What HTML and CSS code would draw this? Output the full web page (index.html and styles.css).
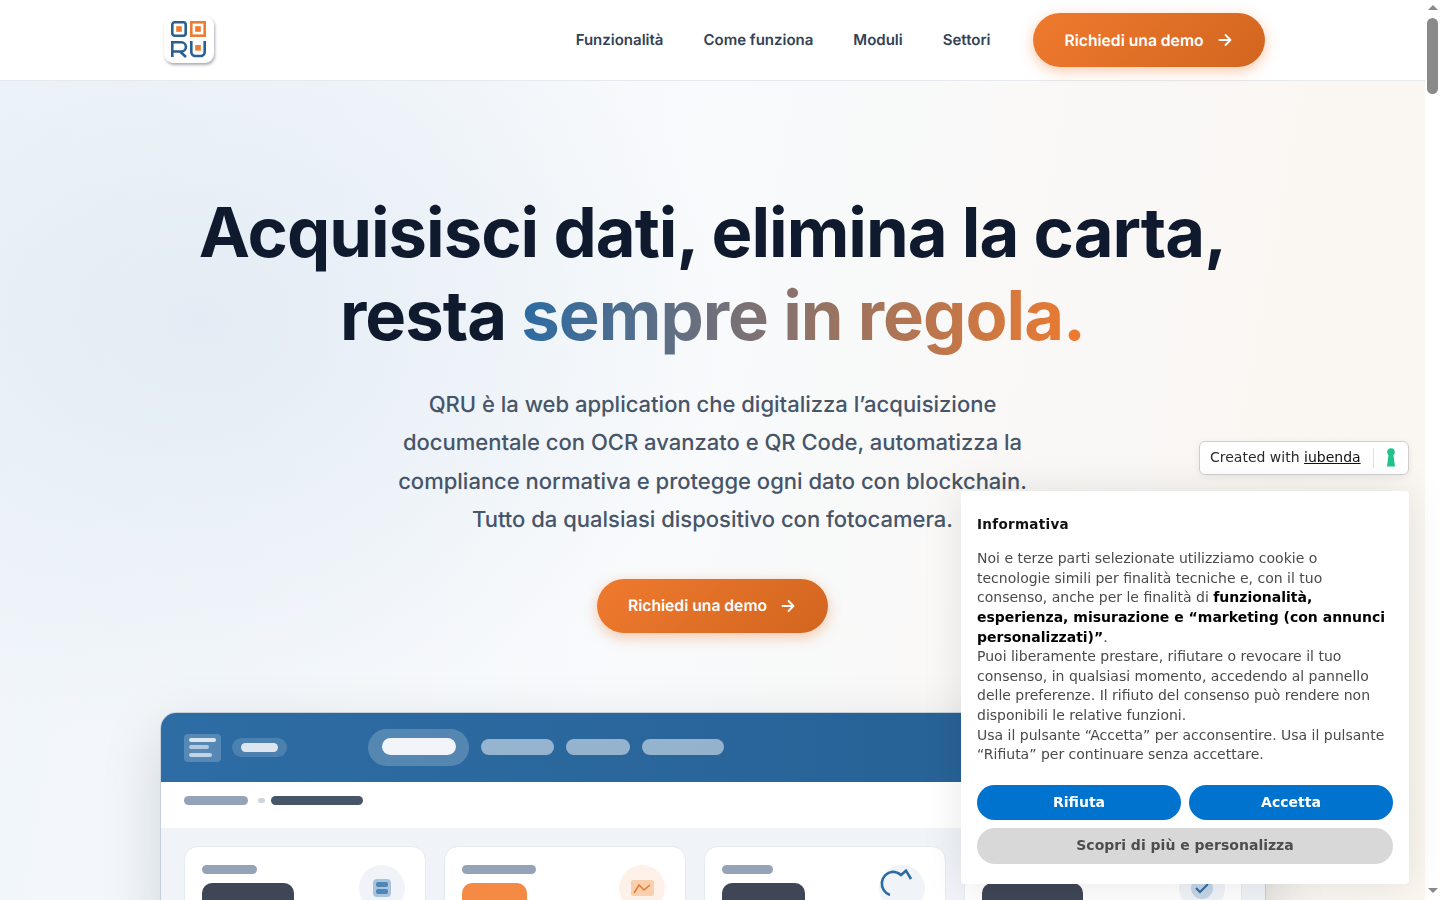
FILE: index.html
```html
<!DOCTYPE html>
<html lang="it">
<head>
    <meta charset="utf-8">
    <title>QRU</title>
    <link rel="stylesheet" href="styles.css">
</head>
<body>
<div class="page">
    <header class="topbar">
        <div class="topbar_inner">
            <a class="logo" href="#">
                <svg width="36" height="37" viewBox="0 0 36 37">
                    <rect x="1.3" y="1.3" width="13.4" height="13.4" rx="2.5" fill="none" stroke="#2a5f91" stroke-width="2.6"/>
                    <rect x="5.2" y="5.2" width="5.6" height="5.6" fill="#ed7b30"/>
                    <rect x="20.3" y="1.3" width="13.4" height="13.4" fill="none" stroke="#ed7b30" stroke-width="2.6"/>
                    <rect x="24.2" y="5.2" width="5.6" height="5.6" fill="#ed7b30"/>
                    <path d="M1.3 36V21.3h9a4.5 4.5 0 0 1 0 9.2H1.3M9 30.5l6 5.5" fill="none" stroke="#2a5f91" stroke-width="2.6"/>
                    <path d="M20.3 20v11a4 4 0 0 0 4 4h5.4a4 4 0 0 0 4-4V20" fill="none" stroke="#2a5f91" stroke-width="2.6"/>
                    <rect x="24.2" y="24" width="5.6" height="5.6" fill="#ed7b30"/>
                </svg>
            </a>
            <nav class="menu">
                <a href="#">Funzionalità</a>
                <a href="#">Come funziona</a>
                <a href="#">Moduli</a>
                <a href="#">Settori</a>
            </nav>
            <a class="cta" href="#">Richiedi una demo
                <svg width="16" height="16" viewBox="0 0 16 16"><path d="M2.5 8h11M8.5 3l5 5-5 5" fill="none" stroke="#fff" stroke-width="1.8" stroke-linecap="round" stroke-linejoin="round"/></svg>
            </a>
        </div>
    </header>

    <main class="hero">
        <h1>Acquisisci dati, elimina la carta,<br>resta <span class="grad">sempre in regola.</span></h1>
        <p class="lead">QRU è la web application che digitalizza l’acquisizione<br>documentale con OCR avanzato e QR Code, automatizza la<br>compliance normativa e protegge ogni dato con blockchain.<br>Tutto da qualsiasi dispositivo con fotocamera.</p>
        <a class="cta cta_hero" href="#">Richiedi una demo
            <svg width="16" height="16" viewBox="0 0 16 16"><path d="M2.5 8h11M8.5 3l5 5-5 5" fill="none" stroke="#fff" stroke-width="1.8" stroke-linecap="round" stroke-linejoin="round"/></svg>
        </a>

        <section class="mock">
            <div class="mock_head">
                <div class="mock_brand">
                    <span class="brand_icon"><i></i><i></i><i></i></span>
                    <span class="brand_pill"><i></i></span>
                </div>
                <div class="mock_tabs">
                    <span class="tab_active"><i></i></span>
                    <span class="tab t1"></span>
                    <span class="tab t2"></span>
                    <span class="tab t3"></span>
                </div>
            </div>
            <div class="mock_crumbs">
                <span class="crumb c1"></span>
                <span class="crumb c2"></span>
                <span class="crumb c3"></span>
            </div>
            <div class="mock_body">
                <div class="stat">
                    <div><span class="stat_label w55"></span><span class="stat_value w92"></span></div>
                    <span class="stat_icon blue">
                        <span class="db"><i></i><i></i></span>
                    </span>
                </div>
                <div class="stat">
                    <div><span class="stat_label w74"></span><span class="stat_value w65 orange"></span></div>
                    <span class="stat_icon peach">
                        <svg width="23" height="16" viewBox="0 0 23 16"><rect width="23" height="16" rx="2" fill="#f9cfae"/><path d="M3 13l5-8 5 5 6-5" fill="none" stroke="#e67a33" stroke-width="1.5"/></svg>
                    </span>
                </div>
                <div class="stat">
                    <div><span class="stat_label w51"></span><span class="stat_value w83"></span></div>
                    <span class="stat_icon blue">
                        <svg class="gauge" width="46" height="46" viewBox="0 0 46 46"><path d="M11 30A12 12 0 0 1 13.5 6.7Q18.5 6.8 22 10L27 5.7L32 14" fill="none" stroke="#2c6ba3" stroke-width="2.6"/></svg>
                    </span>
                </div>
                <div class="stat stat_wide">
                    <div><span class="stat_label w51"></span><span class="stat_value w101"></span></div>
                    <span class="stat_icon blue">
                        <span class="check"><svg width="16" height="12" viewBox="0 0 16 12"><path d="M2 6l4 4 8-8" fill="none" stroke="#2c6ba3" stroke-width="2"/></svg></span>
                    </span>
                </div>
            </div>
        </section>
    </main>
</div>

<aside class="scrollbar">
    <span class="arrow up"></span>
    <span class="thumb"></span>
    <span class="arrow down"></span>
</aside>

<div class="iub_badge">
    <span class="iub_text">Created with <u>iubenda</u></span>
    <span class="iub_sep"></span>
    <svg class="iub_key" width="10" height="19" viewBox="0 0 10 19"><circle cx="5" cy="4" r="3.8" fill="#1fc48d"/><path d="M2.8 5h4.400L9 18.5H1z" fill="#1fc48d"/></svg>
</div>

<div class="cookie">
    <p class="cookie_title">Informativa</p>
    <p class="cookie_text">Noi e terze parti selezionate utilizziamo cookie o tecnologie simili per finalità tecniche e, con il tuo consenso, anche per le finalità di <b>funzionalità, esperienza, misurazione e “marketing (con annunci personalizzati)”</b>.<br>Puoi liberamente prestare, rifiutare o revocare il tuo consenso, in qualsiasi momento, accedendo al pannello delle preferenze. Il rifiuto del consenso può rendere non disponibili le relative funzioni.<br>Usa il pulsante “Accetta” per acconsentire. Usa il pulsante “Rifiuta” per continuare senza accettare.</p>
    <div class="cookie_btns">
        <button class="btn_blue">Rifiuta</button>
        <button class="btn_blue">Accetta</button>
        <button class="btn_grey">Scopri di più e personalizza</button>
    </div>
</div>
</body>
</html>
```

FILE: styles.css
```css
* {
    box-sizing: border-box;
}
html, body {
    height: 100%;
}
body {
    margin: 0;
    display: flex;
    height: 900px;
    overflow: hidden;
    background-color: #fff;
    font-family: Inter, "Liberation Sans", sans-serif;
}
a {
    text-decoration: none;
    color: inherit;
}

.page {
    width: 1425px;
    flex: none;
    height: 900px;
    overflow: hidden;
}

/* barre du haut */
.topbar {
    height: 81px;
    background-color: #fff;
    border-bottom: 1px solid #e6e9ed;
}
.topbar_inner {
    width: 1200px;
    height: 80px;
    margin: 0 auto;
    padding: 0 48px;
    display: flex;
    align-items: center;
}
.logo {
    width: 50px;
    height: 47px;
    margin: 0 0 1px 3px;
    display: flex;
    align-items: center;
    justify-content: center;
    background-color: #fff;
    border-radius: 9px;
    box-shadow: 1px 2px 3px rgba(15, 23, 42, .35);
}
.menu {
    margin-left: auto;
    margin-right: 42px;
    padding-bottom: 2px;
    display: flex;
    gap: 40px;
    font-size: 15px;
    font-weight: 600;
    color: #334155;
    text-rendering: geometricPrecision;
}
.cta {
    display: flex;
    align-items: center;
    justify-content: center;
    gap: 13px;
    width: 232px;
    height: 54px;
    border-radius: 27px;
    background: linear-gradient(135deg, #ef7a2e, #d2651f);
    box-shadow: 0 4px 14px rgba(237, 123, 48, .4);
    color: #fff;
    font-size: 15.68px;
    font-weight: 600;
    text-rendering: geometricPrecision;
}
.cta_hero {
    width: 231px;
    margin: 0 auto;
    padding: 0 1px 1px 0;
}

/* hero */
.hero {
    height: 819px;
    padding-top: 110px;
    text-align: center;
    background:
        radial-gradient(520px 420px at 200px 240px, rgba(222, 232, 242, .75), rgba(222, 232, 242, 0)),
        linear-gradient(100deg, #f0f5fa 0%, #f8fafc 45%, #fbf6f0 100%);
}
h1 {
    margin: 0;
    font-size: 68.7px;
    line-height: 83px;
    font-weight: 700;
    letter-spacing: -1px;
    color: #0f1a2e;
}
.grad {
    background: linear-gradient(90deg, #2c6ba3, #ef7a2e);
    -webkit-background-clip: text;
    background-clip: text;
    color: transparent;
}
.lead {
    height: 154px;
    margin: 29px 0 39px;
    font-size: 22px;
    font-weight: 500;
    line-height: 38.4px;
    color: #475569;
    text-rendering: geometricPrecision;
}

/* faux tableau de bord */
.mock {
    width: 1106px;
    height: 300px;
    margin: 79px 0 0 160px;
    border: 1px solid #c5cfdb;
    border-radius: 16px 16px 0 0;
    overflow: hidden;
    background-color: #fff;
    box-shadow: 0 20px 60px rgba(15, 23, 42, .15);
    text-align: left;
}
.mock_head {
    height: 69px;
    padding-left: 23px;
    display: flex;
    align-items: center;
    background: linear-gradient(90deg, #2d6ca4, #265f92);
}
.mock_brand {
    width: 184px;
    display: flex;
    align-items: center;
    gap: 11px;
}
.brand_icon {
    width: 37px;
    height: 28px;
    padding: 4px 5px 5px;
    display: flex;
    flex-direction: column;
    justify-content: space-between;
    border-radius: 4px;
    background-color: rgba(255, 255, 255, .2);
}
.brand_icon i {
    height: 4px;
    border-radius: 2px;
    background-color: #dde6ef;
}
.brand_icon i:nth-child(2) {
    width: 20px;
    opacity: .7;
}
.brand_icon i:nth-child(3) {
    width: 23px;
    opacity: .8;
}
.brand_pill {
    width: 55px;
    height: 19px;
    padding: 5px 9px;
    border-radius: 10px;
    background-color: rgba(255, 255, 255, .15);
}
.brand_pill i {
    display: block;
    height: 9px;
    border-radius: 5px;
    background-color: #dde6ef;
}
.mock_tabs {
    display: flex;
    align-items: center;
    gap: 12px;
}
.tab_active {
    width: 101px;
    height: 37px;
    padding: 9px 13px 9px 14px;
    border-radius: 19px;
    background-color: rgba(255, 255, 255, .2);
}
.tab_active i {
    display: block;
    height: 17px;
    border-radius: 9px;
    background-color: #f1f5f9;
}
.tab {
    height: 16px;
    margin-bottom: 2px;
    border-radius: 8px;
    background-color: rgba(255, 255, 255, .5);
}
.t1 { width: 73px; }
.t2 { width: 64px; }
.t3 { width: 82px; }

.mock_crumbs {
    height: 46px;
    padding: 14px 0 0 23px;
    display: flex;
    align-items: flex-start;
    background-color: #fff;
}
.crumb {
    height: 9px;
    border-radius: 5px;
}
.c1 { width: 64px; background-color: #94a3b8; }
.c2 { width: 7px; height: 5px; margin: 2px 6px 0 10px; background-color: #cbd5e1; }
.c3 { width: 92px; background-color: #475569; }

.mock_body {
    height: 190px;
    padding: 18px 23px;
    display: flex;
    gap: 18px;
    background-color: #f0f4f8;
}
.stat {
    width: 242px;
    height: 120px;
    flex: none;
    padding: 18px 20px 0 17px;
    display: flex;
    justify-content: space-between;
    background-color: #fff;
    border: 1px solid #e6ebf1;
    border-radius: 14px;
}
.stat_wide {
    width: 278px;
    padding-right: 16px;
}
.stat_label, .stat_value {
    display: block;
    border-radius: 5px;
}
.stat_label {
    height: 9px;
    background-color: #94a3b8;
}
.stat_value {
    height: 30px;
    margin-top: 9px;
    border-radius: 10px;
    background-color: #3f4656;
}
.orange { background-color: #f58a45; }
.w55 { width: 55px; }
.w74 { width: 74px; }
.w51 { width: 51px; }
.w92 { width: 92px; }
.w65 { width: 65px; }
.w83 { width: 83px; }
.w101 { width: 101px; }
.stat_icon {
    width: 46px;
    height: 46px;
    border-radius: 50%;
    display: flex;
    align-items: center;
    justify-content: center;
    position: relative;
}
.blue { background-color: #f0f4f9; }
.peach { background-color: #fdf1ea; }
.db {
    width: 18px;
    height: 18px;
    padding: 3px;
    display: flex;
    flex-direction: column;
    justify-content: space-between;
    border-radius: 4px;
    background-color: #a9c3dc;
}
.db i {
    height: 5px;
    border-radius: 2px;
    background-color: #4f86b8;
}
.gauge {
    position: absolute;
    left: 0;
    top: 0;
}
.check {
    width: 22px;
    height: 22px;
    display: flex;
    align-items: center;
    justify-content: center;
    border-radius: 50%;
    background-color: #c4d5e6;
}

/* barre de defilement */
.scrollbar {
    width: 15px;
    flex: none;
    height: 900px;
    padding: 5px 0 7px;
    display: flex;
    flex-direction: column;
    align-items: center;
    background-color: #fff;
}
.thumb {
    width: 11px;
    height: 76px;
    margin-top: 8px;
    border-radius: 6px;
    background-color: #8a8a8a;
}
.arrow {
    width: 0;
    height: 0;
    border-left: 5px solid transparent;
    border-right: 5px solid transparent;
}
.up {
    border-bottom: 5px solid #8a8a8a;
}
.down {
    margin-top: auto;
    border-top: 5px solid #8a8a8a;
}

/* bandeau cookies */
.iub_badge {
    position: fixed;
    left: 1199px;
    top: 441px;
    width: 210px;
    height: 34px;
    padding: 0 0 3px 10px;
    display: flex;
    align-items: center;
    background-color: #fff;
    border: 1px solid #cfcfcf;
    border-radius: 6px;
    box-shadow: 0 2px 8px rgba(0, 0, 0, .08);
    font-family: "DejaVu Sans", sans-serif;
    font-size: 14px;
    color: #2b2b2b;
}
.iub_text {
    white-space: nowrap;
}
.iub_badge u {
    color: #111;
}
.iub_sep {
    width: 1px;
    height: 20px;
    flex: none;
    margin: 2px 0 0 12px;
    background-color: #e2e2e2;
}
.iub_key {
    flex: none;
    margin: 2px 0 0 12px;
}
.cookie {
    position: fixed;
    left: 961px;
    top: 491px;
    width: 448px;
    height: 393px;
    padding: 24px 16px 0;
    background-color: #fff;
    border-radius: 4px;
    box-shadow: 0 0 40px rgba(0, 0, 0, .1);
    font-family: "DejaVu Sans", sans-serif;
    color: #111;
}
.cookie_title {
    margin: 0 0 16.3px;
    font-size: 13.5px;
    line-height: 18px;
    font-weight: 700;
    letter-spacing: .3px;
}
.cookie_text {
    margin: 0 0 19.7px;
    font-size: 14px;
    line-height: 19.6px;
    color: #4a4a4a;
}
.cookie_text b {
    color: #000;
}
.cookie_btns {
    display: grid;
    grid-template-columns: 1fr 1fr;
    gap: 8px;
}
.cookie_btns button {
    height: 35px;
    border: 0;
    border-radius: 18px;
    font-family: inherit;
    font-size: 14px;
    font-weight: 700;
}
.btn_blue {
    background-color: #0073ce;
    color: #fff;
}
.cookie_btns .btn_grey {
    grid-column: 1 / 3;
    height: 36px;
    padding-bottom: 2px;
    background-color: #d8d8d8;
    color: #4d4d4d;
}
```
